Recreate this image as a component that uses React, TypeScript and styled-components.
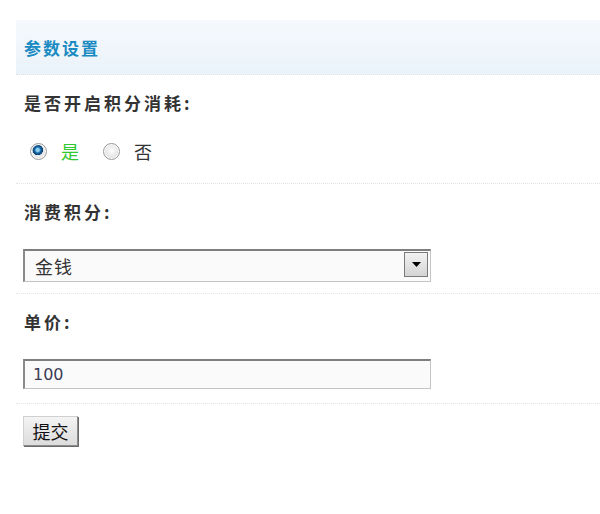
import styled, { createGlobalStyle } from 'styled-components';

const GlobalStyle = createGlobalStyle`
  html, body {
    margin: 0;
    padding: 0;
    background: #ffffff;
  }
  body {
    font-family: "Noto Sans CJK SC", "DejaVu Sans", sans-serif;
  }
`;

const CJK = `"Noto Sans CJK SC", "DejaVu Sans", sans-serif`;

export default function App() {
  return (
    <>
      <GlobalStyle />
      <Styled.Page>
        <Styled.Header>
          <Styled.Title>参数设置</Styled.Title>
        </Styled.Header>

        <Styled.Section $bottom={22}>
          <Styled.Label>是否开启积分消耗:</Styled.Label>
          <Styled.RadioRow>
            <Styled.RadioLabel>
              <Styled.Radio type="radio" name="enable" defaultChecked />
              <Styled.RadioText $active>是</Styled.RadioText>
            </Styled.RadioLabel>
            <Styled.RadioLabel>
              <Styled.Radio type="radio" name="enable" />
              <Styled.RadioText>否</Styled.RadioText>
            </Styled.RadioLabel>
          </Styled.RadioRow>
        </Styled.Section>

        <Styled.Section $bottom={11}>
          <Styled.Label>消费积分:</Styled.Label>
          <Styled.SelectWrap>
            <Styled.Select defaultValue="money">
              <option value="money">金钱</option>
            </Styled.Select>
            <Styled.Arrow>
              <svg width="9" height="5" viewBox="0 0 9 5">
                <path d="M0 0 H9 L4.5 5 Z" fill="#000" />
              </svg>
            </Styled.Arrow>
          </Styled.SelectWrap>
        </Styled.Section>

        <Styled.Section $bottom={14}>
          <Styled.Label>单价:</Styled.Label>
          <Styled.Input defaultValue="100" />
        </Styled.Section>

        <Styled.Submit type="button">提交</Styled.Submit>
      </Styled.Page>
    </>
  );
}

const Styled = {
  Page: styled.div`
    padding: 20px 0 60px 16px;
  `,

  Header: styled.div`
    display: flex;
    align-items: center;
    height: 54px;
    padding-left: 8px;
    background: linear-gradient(to bottom, #f5f9fd, #eaf3fa);
    border-bottom: 1px dotted #d6e2ec;
  `,

  Title: styled.h2`
    margin: 0;
    font-family: ${CJK};
    font-size: 17px;
    font-weight: 700;
    letter-spacing: 2px;
    color: #1a8bc2;
  `,

  Section: styled.div<{ $bottom: number }>`
    display: flex;
    flex-direction: column;
    align-items: flex-start;
    padding: 20px 0 ${(p) => p.$bottom}px 7px;
    border-bottom: 1px dotted #dfe5e9;
  `,

  Label: styled.div`
    margin-left: 1px;
    font-family: ${CJK};
    font-size: 17px;
    line-height: 16px;
    font-weight: 700;
    letter-spacing: 3px;
    color: #333333;
    margin-bottom: 29px;
  `,

  RadioRow: styled.div`
    display: flex;
    align-items: center;
    gap: 24px;
    height: 20px;
    padding-left: 7px;
    margin-top: 1px;
  `,

  RadioLabel: styled.label`
    display: flex;
    align-items: center;
    gap: 14px;
  `,

  Radio: styled.input`
    appearance: none;
    margin: 0;
    width: 17px;
    height: 17px;
    border-radius: 50%;
    border: 1px solid #9a9a9a;
    background: radial-gradient(circle at 50% 45%, #ffffff 0%, #e6e6e6 55%, #c8c8c8 100%);
    box-shadow: inset 0 0 0 1px #ffffff;

    &:checked {
      background:
        radial-gradient(circle at 45% 40%, #8fd0f0 0 1.5px, #1a6aa8 3px, #0b3f70 5px, transparent 5.5px),
        radial-gradient(circle, #ffffff 0%, #e2e2e2 60%, #bcbcbc 100%);
    }
  `,

  RadioText: styled.span<{ $active?: boolean }>`
    font-family: ${CJK};
    font-size: 18px;
    line-height: 20px;
    color: ${(p) => (p.$active ? '#2fc82f' : '#333333')};
  `,

  SelectWrap: styled.div`
    position: relative;
    width: 408px;
    height: 33px;
  `,

  Select: styled.select`
    appearance: none;
    width: 100%;
    height: 100%;
    margin: 0;
    padding: 0 0 0 10px;
    border: 1px solid #c4c4c4;
    border-top: 2px solid #7e7e7e;
    border-left: 2px solid #8a8a8a;
    background: #fafafa;
    font-family: ${CJK};
    font-size: 18px;
    letter-spacing: 1px;
    color: #333333;
  `,

  Arrow: styled.span`
    position: absolute;
    top: 3px;
    right: 3px;
    width: 24px;
    height: 25px;
    display: flex;
    align-items: center;
    justify-content: center;
    box-sizing: border-box;
    border: 1px solid #7a7a7a;
    background: linear-gradient(to bottom, #f2f2f2, #d4d4d4);
    pointer-events: none;
  `,

  Input: styled.input`
    box-sizing: border-box;
    width: 408px;
    height: 30px;
    margin: 0;
    padding: 0 0 0 8px;
    border: 1px solid #c4c4c4;
    border-top: 2px solid #7e7e7e;
    border-left: 2px solid #8a8a8a;
    background: #fafafa;
    font-family: "DejaVu Sans", sans-serif;
    font-size: 16px;
    color: #3a3a55;
    outline: none;
  `,

  Submit: styled.button`
    display: block;
    margin: 12px 0 0 7px;
    width: 55px;
    height: 30px;
    padding: 0;
    border: 1px solid #8c8c8c;
    border-top-color: #d0d0d0;
    border-left-color: #d0d0d0;
    box-shadow: 1px 1px 0 #6a6a6a;
    background: linear-gradient(to bottom, #f4f4f4, #dcdcdc);
    font-family: ${CJK};
    font-size: 18px;
    color: #111111;
    letter-spacing: 0;
  `,
};
